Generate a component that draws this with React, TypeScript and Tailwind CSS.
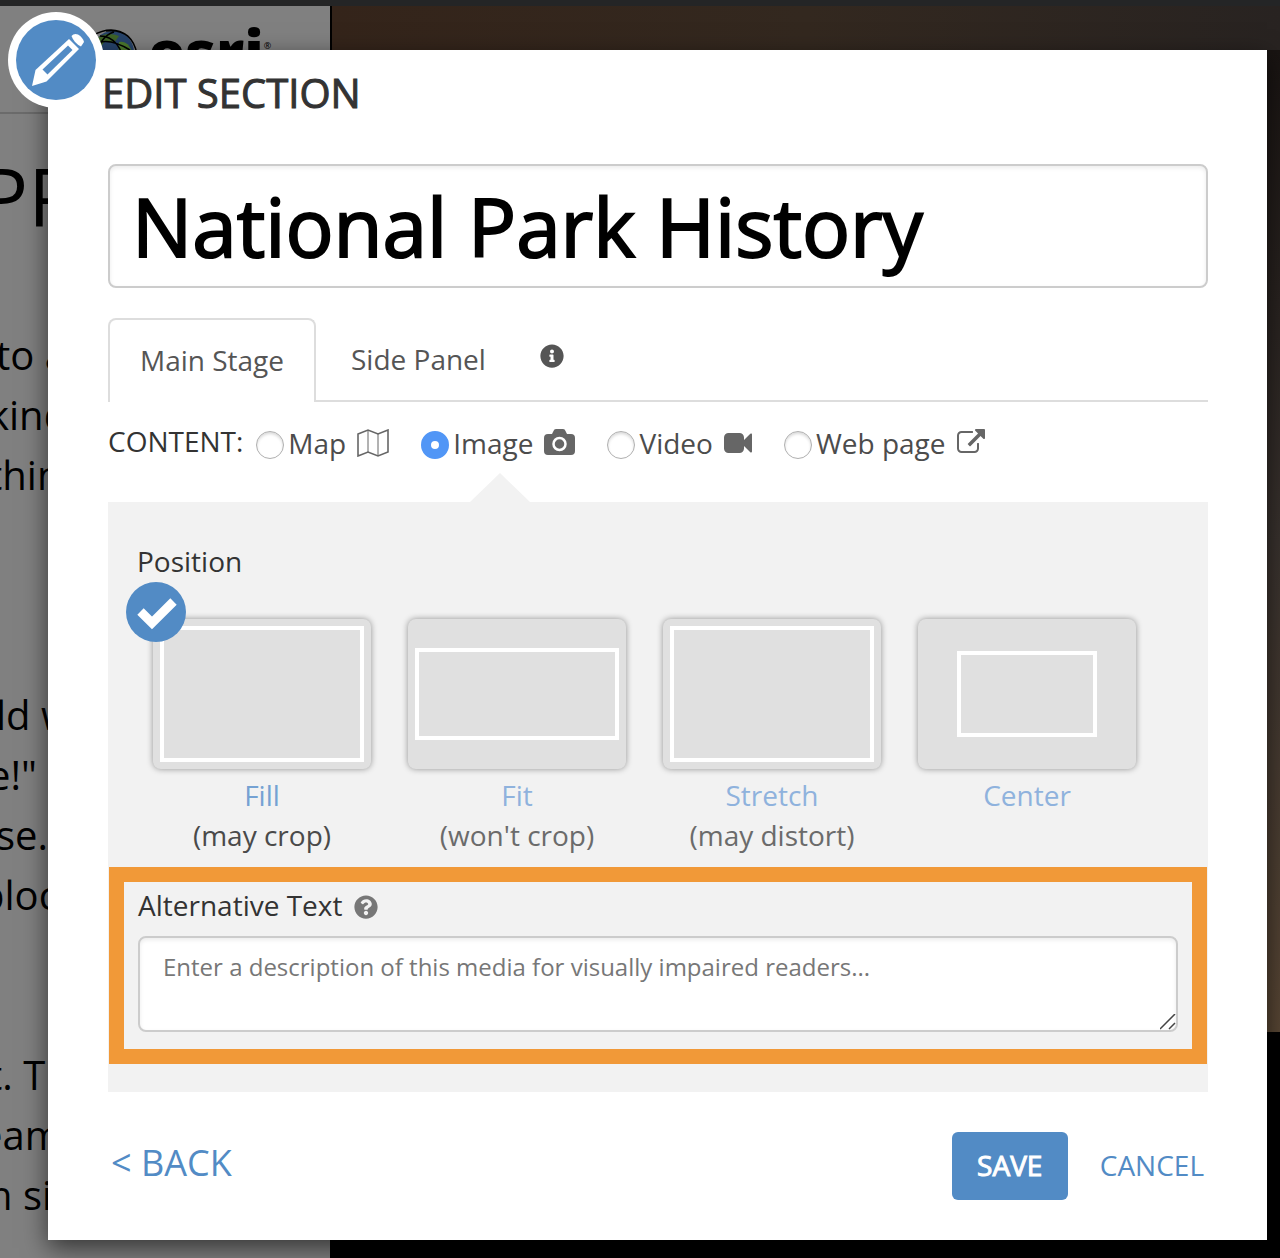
import { useState } from "react";
import { FaInfoCircle, FaQuestionCircle } from "react-icons/fa";

const contentTypes = [
  { id: "map", label: "Map", icon: <MapIcon /> },
  { id: "image", label: "Image", icon: <CameraIcon /> },
  { id: "video", label: "Video", icon: <VideoIcon /> },
  { id: "webpage", label: "Web page", icon: <ExternalIcon /> },
];

const positions = [
  { id: "fill", label: "Fill", hint: "(may crop)", frame: "h-[136px] w-[204px]" },
  { id: "fit", label: "Fit", hint: "(won't crop)", frame: "h-[92px] w-[204px]" },
  { id: "stretch", label: "Stretch", hint: "(may distort)", frame: "h-[136px] w-[204px]" },
  { id: "center", label: "Center", hint: "", frame: "h-[86px] w-[140px]" },
];

export default function App() {
  return (
    <div className="grid min-h-screen overflow-hidden bg-black font-['Open_Sans',sans-serif]">
      <StoryBackdrop />
      <div className="relative z-10 col-start-1 row-start-1 mt-[50px] mr-[13px] mb-[18px] ml-12 self-start">
        <EditSection />
      </div>
    </div>
  );
}

/* Dimmed story page behind the dialog */
function StoryBackdrop() {
  return (
    <div className="col-start-1 row-start-1 flex min-w-0 flex-col">
      <div className="h-1.5 bg-[#242526]" />
      <div className="flex flex-1">
        <aside className="w-[330px] shrink-0 overflow-hidden bg-[#808080] whitespace-nowrap text-black">
          <div className="flex h-[108px] items-start border-b-2 border-[#6b6b6b] pt-[22px] pl-[92px]">
            <EsriGlobe />
            <div className="ml-2.5 flex items-start">
              <span className="text-[60px] leading-[46px] font-extrabold">esri</span>
              <span className="pt-3 text-[9px] leading-3">®</span>
            </div>
          </div>
          <div className="-ml-5 h-[211px] pt-7 text-[80px] leading-[108px]">PP</div>
          <div className="text-[40px] leading-[60px]">
            <p className="-ml-1">to a</p>
            <p className="-ml-3">kind</p>
            <p className="-ml-3">thin</p>
            <p className="-ml-1 mt-[180px]">ld w</p>
            <p className="-ml-3">e!"</p>
            <p className="-ml-1">se.</p>
            <p className="-ml-5">bloc</p>
            <p className="-ml-3 mt-[120px]">t. T</p>
            <p className="-ml-5">eam</p>
            <p className="-ml-3">n si</p>
          </div>
        </aside>
        <div className="flex flex-1 flex-col border-l-2 border-black">
          <div className="h-11 bg-linear-to-r from-[#34241a] via-[#33281f] to-[#282321]" />
          <div className="h-[982px] bg-linear-to-b from-[#191412] via-[#39322e] to-[#584634]" />
        </div>
      </div>
    </div>
  );
}

function EditSection() {
  return (
    <form
      className="bg-white pr-[59px] pb-10 pl-[60px] text-[28px] leading-10 text-[#333] shadow-[0_8px_24px_rgba(0,0,0,0.6)]"
      onSubmit={(e) => e.preventDefault()}
    >
      <div className="absolute -top-[38px] -left-10 flex size-24 items-center justify-center rounded-full bg-white">
        <div className="flex size-20 items-center justify-center rounded-full bg-[#528bc5]">
          <PencilIcon />
        </div>
      </div>
      <h1 className="-ml-1.5 pt-[15px] text-[40px] leading-[56px] font-medium [-webkit-text-stroke:1px_currentColor]">
        EDIT SECTION
      </h1>
      <input
        aria-label="Section title"
        defaultValue="National Park History"
        className="mt-[43px] block h-[124px] w-full rounded-lg border-2 border-[#ccc] bg-white px-[22px] pb-0.5 text-[80px] font-medium text-black shadow-[inset_0_2px_4px_rgba(0,0,0,0.08)] [-webkit-text-stroke:2px_currentColor]"
      />
      <Tabs />
      <MediaPicker />
      <div className="mt-10 flex items-center">
        <button type="button" className="mb-1.5 ml-[3px] text-[36px] text-[#528bc5]">
          &lt; BACK
        </button>
        <button
          type="submit"
          className="ml-auto h-[68px] w-[116px] rounded-md bg-[#528bc5] pb-0.5 font-medium text-white [-webkit-text-stroke:1px_currentColor]"
        >
          SAVE
        </button>
        <button type="button" className="ml-7 px-1 pb-0.5 text-[#528bc5]">
          CANCEL
        </button>
      </div>
    </form>
  );
}

function Tabs() {
  return (
    <div className="mt-[30px] flex h-[84px] text-[#555]">
      <button type="button" className="w-[208px] rounded-t-lg border-2 border-b-0 border-[#ddd] pb-[3px]">
        Main Stage
      </button>
      <div className="flex flex-1 items-center border-b-2 border-[#ddd] pl-[35px]">
        <button type="button">Side Panel</button>
        <FaInfoCircle className="mb-1.5 ml-[54px] size-6" />
      </div>
    </div>
  );
}

function MediaPicker() {
  const [content, setContent] = useState<string>("image");

  return (
    <>
      <fieldset aria-label="Content" className="flex h-[100px] items-start pt-[19px] text-[#4c4c4c]">
        <span className="mr-[13px] text-[#333]">CONTENT:</span>
        {contentTypes.map((type) => (
          <label key={type.id} className="relative mr-8 flex items-center pt-0.5">
            <input
              type="radio"
              name="content"
              checked={content === type.id}
              onChange={() => setContent(type.id)}
              className="mt-1 mr-1 size-7 appearance-none rounded-full border border-[#b0b0b0] bg-white shadow-[inset_0_2px_3px_rgba(0,0,0,0.15)] checked:border-[10px] checked:border-[#5196f6] checked:shadow-none"
            />
            {type.label}
            <span className="ml-[11px] text-[#666]">{type.icon}</span>
            {content === type.id && (
              <svg className="absolute top-[52px] left-1/2 -ml-7 h-[29px] w-[60px]" viewBox="0 0 60 29">
                <path d="M30 0 60 29H0z" fill="#f2f2f2" />
              </svg>
            )}
          </label>
        ))}
      </fieldset>
      <div className="bg-[#f2f2f2] pb-7">
        <PositionPicker />
        <div className="mx-px border-[15px] border-[#f19938] px-3.5 pt-[3px] pb-[17px]">
          <div className="flex items-center">
            <label htmlFor="alt-text">Alternative Text</label>
            <FaQuestionCircle className="mt-1 ml-3 size-6 text-[#777]" />
          </div>
          <div className="relative mt-[11px]">
            <textarea
              id="alt-text"
              placeholder="Enter a description of this media for visually impaired readers..."
              className="block h-24 w-full resize-none rounded-lg border-2 border-[#ccc] bg-white px-[23px] py-[11px] text-[24px] leading-9 shadow-[inset_0_2px_4px_rgba(0,0,0,0.08)] placeholder:text-[#777]"
            />
            <svg
              className="pointer-events-none absolute right-0.5 bottom-0.5 size-4"
              viewBox="0 0 16 16"
              stroke="#444"
              strokeWidth="1.500"
            >
              <path d="M0 15 15 0M9 15 15 9" />
            </svg>
          </div>
        </div>
      </div>
    </>
  );
}

function PositionPicker() {
  const [position, setPosition] = useState<string>("fill");

  return (
    <div className="h-[365px] pt-[39px] pl-[29px]">
      <div>Position</div>
      <div className="mt-[38px] ml-4 flex gap-[37px]">
        {positions.map((item) => (
          <button
            key={item.id}
            type="button"
            onClick={() => setPosition(item.id)}
            className={
              item.id === position
                ? "relative w-[218px] text-[#4a4a4a]"
                : "relative w-[218px] text-[#6b6b6b]"
            }
          >
            <div className="flex h-[150px] items-center justify-center rounded-lg bg-[#e0e0e0] shadow-[0_0_6px_rgba(0,0,0,0.4)]">
              <div className={`border-4 border-white ${item.frame}`} />
            </div>
            <div className={item.id === position ? "mt-1.5 text-[#75a2d3]" : "mt-1.5 text-[#8fb2dd]"}>
              {item.label}
            </div>
            <div className="h-10">{item.hint}</div>
            {item.id === position && (
              <div className="absolute -top-[37px] -left-[27px]">
                <CheckBadge />
              </div>
            )}
          </button>
        ))}
      </div>
    </div>
  );
}

function CheckBadge() {
  return (
    <svg className="size-[60px]" viewBox="0 0 60 60">
      <circle cx="30" cy="30" r="30" fill="#528bc5" />
      <path d="M14.500 29.500 26 41 47.500 19.500" fill="none" stroke="#fff" strokeWidth="9" />
    </svg>
  );
}

function PencilIcon() {
  return (
    <svg className="size-20" viewBox="0 0 80 80">
      <path d="M16 66 19.500 50 53 19 63 29 30.500 61.500z" fill="#fff" />
      <path d="M26.500 49.500 52 25.500 56.500 30 31.500 54.500z" fill="#528bc5" />
      <path d="M55.500 16Q58 13 62 14.500 67 17.500 68 22L65 26.500Q58 23 55.500 16z" fill="#fff" />
    </svg>
  );
}

function MapIcon() {
  return (
    <svg className="h-7 w-8" viewBox="0 0 32 28" fill="none" stroke="currentColor" strokeWidth="1.600">
      <path d="M1 5 11 1 21 5 31 1V23L21 27 11 23 1 27z" />
      <path d="M11 1V23M21 5V27" strokeWidth="1" />
    </svg>
  );
}

function CameraIcon() {
  return (
    <svg className="h-7 w-[31px]" viewBox="0 0 31 28">
      <path
        d="M4 5H8L9.500 2Q10 0 12 0H19Q21 0 21.500 2L23 5H27Q31 5 31 9V22Q31 26 27 26H4Q0 26 0 22V9Q0 5 4 5z"
        fill="currentColor"
      />
      <circle cx="15.500" cy="15" r="6" fill="currentColor" stroke="#fff" strokeWidth="2.500" />
    </svg>
  );
}

function VideoIcon() {
  return (
    <svg className="size-7" viewBox="0 0 1792 1792" fill="currentColor">
      <path d="M1792 352v1088q0 42-39 59-13 5-25 5-27 0-45-19l-403-403v166q0 119-84.500 203.500t-203.500 84.500h-704q-119 0-203.500-84.500t-84.500-203.500v-704q0-119 84.500-203.500t203.500-84.500h704q119 0 203.500 84.500t84.500 203.500v165l403-402q18-19 45-19 12 0 25 5 39 17 39 59z" />
    </svg>
  );
}

function ExternalIcon() {
  return (
    <svg className="size-7" viewBox="0 0 1792 1792" fill="currentColor">
      <path d="M1408 928v320q0 119-84.500 203.500t-203.500 84.500h-832q-119 0-203.500-84.500t-84.500-203.500v-832q0-119 84.500-203.500t203.500-84.500h704q14 0 23 9t9 23v64q0 14-9 23t-23 9h-704q-66 0-113 47t-47 113v832q0 66 47 113t113 47h832q66 0 113-47t47-113v-320q0-14 9-23t23-9h64q14 0 23 9t9 23zm384-864v512q0 26-19 45t-45 19-45-19l-176-176-652 652q-10 10-23 10t-23-10l-114-114q-10-10-10-23t10-23l652-652-176-176q-19-19-19-45t19-45 45-19h512q26 0 45 19t19 45z" />
    </svg>
  );
}

function EsriGlobe() {
  return (
    <svg className="size-[46px] shrink-0" viewBox="0 0 46 46">
      <circle cx="21" cy="24" r="21" fill="#27446b" />
      <path d="M5 10Q15 3 27 8L22 15 13 13 8 20z" fill="#3f6427" />
      <path d="M27 14Q36 12 40 24L34 32 26 27z" fill="#4c7a2d" />
      <path
        d="M2 17Q15 8 38 22M8 8Q28 8 34 40M3 30Q8 8 22 4M14 3Q40 0 45 26M0 8Q20-4 36 8"
        fill="none"
        stroke="#000"
        strokeWidth="1.500"
      />
    </svg>
  );
}
